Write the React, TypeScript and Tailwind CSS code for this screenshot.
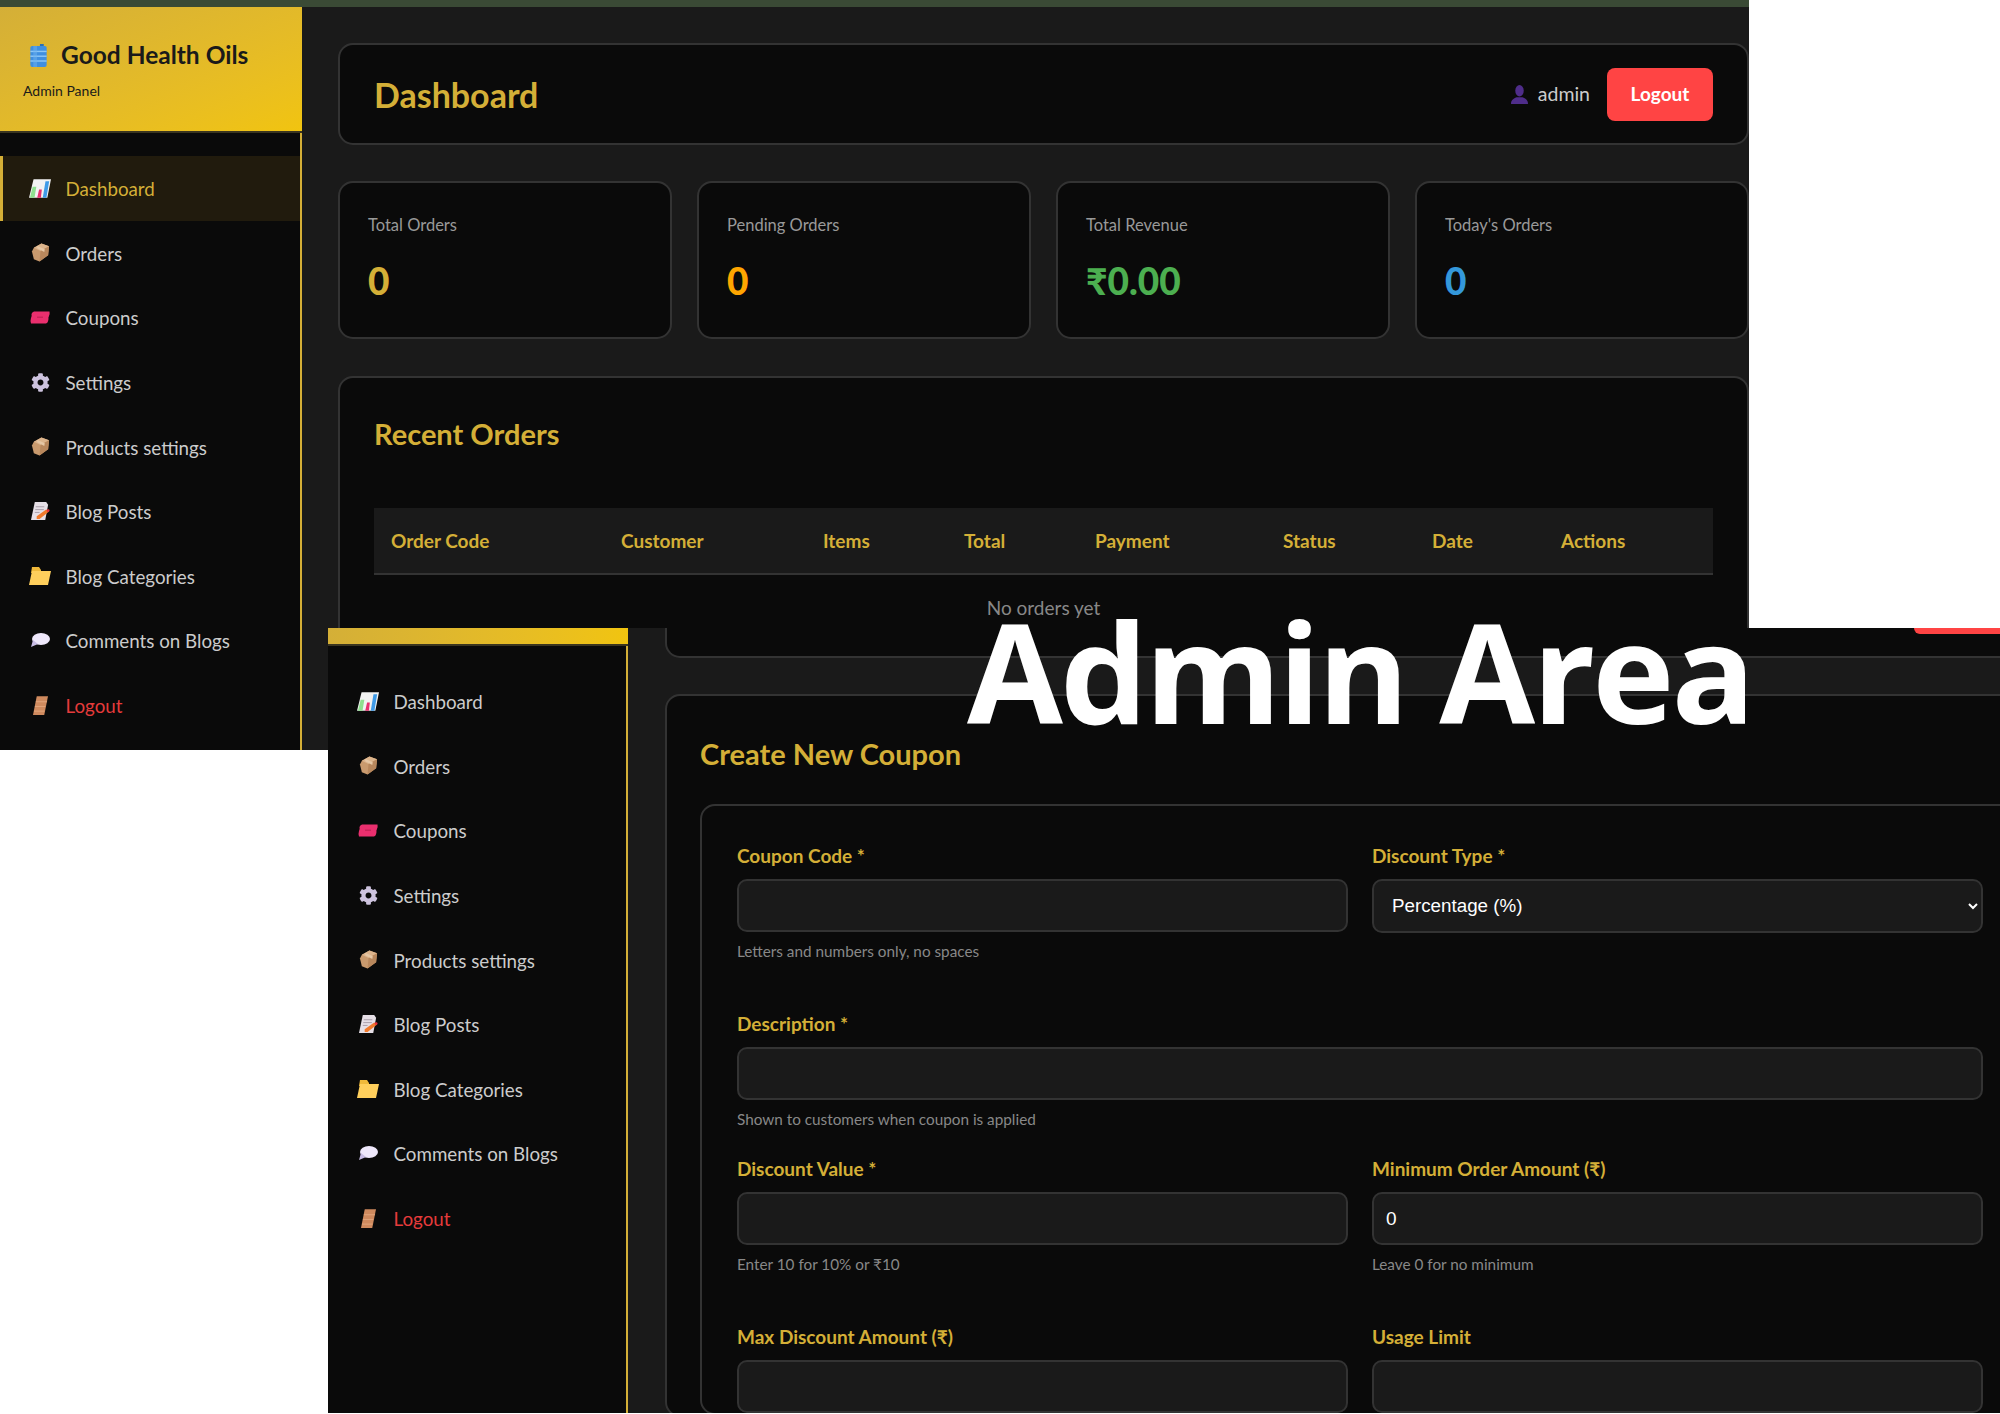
import { FaCog } from "react-icons/fa";

const GOLD = "text-[#d4af37]";

function ChartIcon() {
  return (
    <svg viewBox="0 0 24 20" className="h-[19px] w-[22px] shrink-0">
      <polygon points="5,0 24,0 20,20 0,20" fill="#f3f3f3" />
      <polygon points="4,8 8,8 6,20 1,20" fill="#8fe08f" />
      <polygon points="11,11 14,11 13,20 9,20" fill="#e8306f" />
      <polygon points="18,2 22,2 19,20 15,20" fill="#3f9be8" />
    </svg>
  );
}

function BoxIcon() {
  return (
    <svg viewBox="0 0 20 20" className="h-[19px] w-[19px] shrink-0">
      <path d="M11 0.5 19 3.5 18 13 9 19.5 3 17 1 9 3 5Z" fill="#c99a6e" />
      <path d="M3 5 11 0.5 19 3.5 10 8.5Z" fill="#dcb48c" />
      <path d="M10 8.5 19 3.5 18 13 9 19.5Z" fill="#b8875c" />
      <path d="M6.5 3 14.5 6.5 14 9.5 6.5 5.5Z" fill="#e6c7a5" />
    </svg>
  );
}

function TicketIcon() {
  return (
    <svg viewBox="0 0 20 13" className="h-[13px] w-[20px] shrink-0">
      <path d="M4 0.5H19.5Q20 3 19 5 18 7 18.5 8 18 12 16 12.5H1Q0 10 1 7 2 5 1.5 3 2 1 4 0.5Z" fill="#ea2f6e" />
      <rect x="7" y="5.5" width="6" height="1.5" fill="#c9245a" />
    </svg>
  );
}

function MemoIcon() {
  return (
    <svg viewBox="0 0 20 20" className="h-[19px] w-[19px] shrink-0">
      <polygon points="4,0 16,0 18,3 15,19 0,19" fill="#e6dfe6" />
      <path d="M5 5h9M4.5 8h9M4 11h5" stroke="#a89ca8" strokeWidth="1" />
      <polygon points="16,8 19,10 9,18 6,18 6,15" fill="#f27a2c" />
      <circle cx="18" cy="9" r="1.5" fill="#ea2f3a" />
    </svg>
  );
}

function FolderIcon() {
  return (
    <svg viewBox="0 0 22 18" className="h-[18px] w-[22px] shrink-0">
      <polygon points="3,0 10,0 12,3 12,6 2,6" fill="#f0b93a" />
      <polygon points="3,4 22,4 19,18 0,18" fill="#ffcf5c" />
    </svg>
  );
}

function BubbleIcon() {
  return (
    <svg viewBox="0 0 20 14" className="h-[14px] w-[20px] shrink-0">
      <ellipse cx="11" cy="6" rx="9" ry="6" fill="#efe8fb" />
      <polygon points="3,7 8,11 1,14" fill="#c9bde6" />
    </svg>
  );
}

function DoorIcon() {
  return (
    <svg viewBox="0 0 16 20" className="h-[19px] w-[15px] shrink-0">
      <polygon points="4,0 16,0 12,20 0,20" fill="#cf8a5e" />
      <path d="M3 6h12M2 11h11M1 16h11" stroke="#e3a67e" strokeWidth="1" />
    </svg>
  );
}

function DrumIcon() {
  return (
    <svg viewBox="0 0 17 24" className="h-[23px] w-[17px] shrink-0">
      <rect x="10" y="0" width="4" height="3" fill="#2a6fb8" />
      <rect x="0" y="2" width="17" height="22" rx="2" fill="#3f8fe0" />
      <rect x="0" y="7" width="17" height="1.5" fill="#8cc6f5" />
      <rect x="0" y="12" width="17" height="1.5" fill="#8cc6f5" />
      <rect x="0" y="17" width="17" height="1.5" fill="#8cc6f5" />
      <rect x="3" y="2" width="4" height="22" fill="#6db2ee" opacity="0.5" />
    </svg>
  );
}

function UserIcon() {
  return (
    <svg viewBox="0 0 18 20" className="h-[19px] w-[17px] shrink-0">
      <ellipse cx="9" cy="6" rx="4.5" ry="6" fill="#4f2d8a" />
      <path d="M0 20c0-5 4-6 6-7h6c2 1 6 2 6 7z" fill="#4f2d8a" />
    </svg>
  );
}

const navItems = [
  { label: "Dashboard", icon: <ChartIcon /> },
  { label: "Orders", icon: <BoxIcon /> },
  { label: "Coupons", icon: <TicketIcon /> },
  { label: "Settings", icon: <FaCog className="h-[19px] w-[19px] shrink-0 text-[#cdc3de]" /> },
  { label: "Products settings", icon: <BoxIcon /> },
  { label: "Blog Posts", icon: <MemoIcon /> },
  { label: "Blog Categories", icon: <FolderIcon /> },
  { label: "Comments on Blogs", icon: <BubbleIcon /> },
  { label: "Logout", icon: <DoorIcon /> },
];

function NavList({ active }: { active?: string }) {
  return (
    <nav className="flex flex-col">
      {navItems.map((item) => {
        const isActive = item.label === active;
        const color = isActive
          ? GOLD
          : item.label === "Logout"
            ? "text-[#e53b3b]"
            : "text-[#cccccc]";
        return (
          <div
            key={item.label}
            className={`flex h-[64.6px] items-center border-l-[3px] pl-[27px] ${
              isActive ? "border-[#d4af37] bg-[#211b0d]" : "border-transparent"
            }`}
          >
            <span className="flex w-[20px] shrink-0 items-center justify-center">
              {item.icon}
            </span>
            <span className={`ml-[15.5px] pt-[2px] text-[18.75px] ${color}`}>{item.label}</span>
          </div>
        );
      })}
    </nav>
  );
}

function StatCard({ label, value, color }: { label: string; value: string; color: string }) {
  return (
    <div className="h-[158px] rounded-[15px] border-2 border-[#333333] bg-[#0a0a0a] px-[28px] pt-[30px]">
      <div className="text-[16.5px] leading-[24px] text-[#999999]">{label}</div>
      <div className={`mt-[20px] text-[37px] font-black leading-[48px] ${color}`}>{value}</div>
    </div>
  );
}

function Field({
  label,
  hint,
  value,
}: {
  label: string;
  hint?: string;
  value?: string;
}) {
  return (
    <div>
      <label className={`mb-[10px] block text-[19px] font-bold leading-[27px] ${GOLD}`}>{label}</label>
      <input
        defaultValue={value}
        className="h-[53px] w-full rounded-[10px] border-2 border-[#333333] bg-[#1a1a1a] px-[12px] font-['Liberation_Sans',sans-serif] text-[19px] text-white outline-none"
      />
      {hint && <p className="mt-[9px] text-[15.3px] leading-[20px] text-[#888888]">{hint}</p>}
    </div>
  );
}

const columns = [
  { name: "Order Code", w: "w-[230px]" },
  { name: "Customer", w: "w-[202px]" },
  { name: "Items", w: "w-[141px]" },
  { name: "Total", w: "w-[131px]" },
  { name: "Payment", w: "w-[188px]" },
  { name: "Status", w: "w-[149px]" },
  { name: "Date", w: "w-[129px]" },
  { name: "Actions", w: "w-[169px]" },
];

// top-left capture of the admin dashboard
function DashboardShot() {
  return (
    <div className="absolute left-0 top-0 flex h-[750px] w-[1749px] flex-col overflow-hidden bg-[#1a1a1a]">
      <div className="h-[7px] shrink-0 bg-[#3a4a35]" />
      <div className="flex min-h-0 flex-1">
        <aside className="flex w-[302px] shrink-0 flex-col">
          <div className="h-[126px] shrink-0 border-b-[2px] border-[#3a3520] bg-gradient-to-br from-[#d4af37] to-[#f1c40f] pl-[23px] pt-[31px]">
            <div className="flex items-center pl-[7px]">
              <DrumIcon />
              <span className="ml-[14px] text-[24.5px] font-bold leading-[34px] text-[#1a1a1a]">Good Health Oils</span>
            </div>
            <div className="mt-[9px] text-[14px] leading-[20px] text-[#1a1a1a]">Admin Panel</div>
          </div>
          <div className="flex-1 border-r-2 border-[#d4af37] bg-[#0a0a0a] pt-[23px]">
            <NavList active="Dashboard" />
          </div>
        </aside>
        <main className="min-w-0 flex-1 pl-[36px] pt-[36px]">
          <header className="flex h-[102px] items-center justify-between rounded-[15px] border-2 border-[#333333] bg-[#0a0a0a] pl-[34px] pr-[34px]">
            <h1 className={`pt-[1px] text-[34px] font-bold ${GOLD}`}>Dashboard</h1>
            <div className="flex items-center">
              <UserIcon />
              <span className="ml-[10px] text-[19.5px] text-[#cccccc]">admin</span>
              <button className="ml-[17px] h-[53px] w-[106px] rounded-[8px] bg-[#ff4444] text-[19px] font-bold text-white">
                Logout
              </button>
            </div>
          </header>
          <div className="mt-[36px] grid grid-cols-4 gap-[25px]">
            <StatCard label="Total Orders" value="0" color="text-[#d4af37]" />
            <StatCard label="Pending Orders" value="0" color="text-[#ffa500]" />
            <StatCard label="Total Revenue" value="₹0.00" color="text-[#4caf50]" />
            <StatCard label="Today's Orders" value="0" color="text-[#3498db]" />
          </div>
          <section className="mt-[37px] rounded-[15px] border-2 border-[#333333] bg-[#0a0a0a] px-[34px] pb-[40px] pt-[38px]">
            <h2 className={`text-[29px] font-bold leading-[36px] ${GOLD}`}>Recent Orders</h2>
            <table className="mt-[56px] w-full table-fixed">
              <thead>
                <tr className="h-[66px] border-b-2 border-[#333333] bg-[#1a1a1a]">
                  {columns.map((c) => (
                    <th key={c.name} className={`${c.w} pl-[17px] pt-[2px] text-left text-[19px] font-bold ${GOLD}`}>
                      {c.name}
                    </th>
                  ))}
                </tr>
              </thead>
              <tbody>
                <tr>
                  <td colSpan={8} className="h-[68px] text-center text-[19px] text-[#888888]">
                    No orders yet
                  </td>
                </tr>
              </tbody>
            </table>
          </section>
        </main>
      </div>
    </div>
  );
}

// lower-right capture, the coupon form
function CouponShot() {
  return (
    <div className="absolute left-[328px] top-[628px] flex h-[785px] w-[1672px] overflow-hidden bg-[#1a1a1a]">
      <aside className="flex w-[300px] shrink-0 flex-col">
        <div className="h-[18px] shrink-0 border-b-[2px] border-[#3a3520] bg-gradient-to-r from-[#d4af37] to-[#f1c40f]" />
        <div className="flex-1 border-r-2 border-[#d4af37] bg-[#0a0a0a] pt-[23px]">
          <NavList />
        </div>
      </aside>
      <main className="min-w-0 flex-1 pl-[37px]">
        <div className="h-[30px] w-[1390px] rounded-b-[15px] border-x-2 border-b-2 border-[#333333] bg-[#0a0a0a]">
          <div className="ml-[1247px] h-[6px] w-[106px] rounded-b-[8px] bg-[#ff4444]" />
        </div>
        <section className="mt-[36px] w-[1390px] rounded-[15px] border-2 border-[#333333] bg-[#0a0a0a] px-[33px] pt-[40px]">
          <h2 className={`text-[29px] font-bold leading-[36px] ${GOLD}`}>Create New Coupon</h2>
          <div className="mt-[32px] rounded-[15px] border-2 border-[#333333] px-[35px] pt-[36px]">
            <div className="mb-[49px] grid grid-cols-2 gap-x-[24px]">
              <Field label="Coupon Code *" hint="Letters and numbers only, no spaces" />
              <div>
                <label className={`mb-[10px] block text-[19px] font-bold leading-[27px] ${GOLD}`}>Discount Type *</label>
                <select className="h-[54px] w-full rounded-[10px] border-2 border-[#333333] bg-[#1a1a1a] px-[14px] pb-[2px] font-['Liberation_Sans',sans-serif] text-[18.8px] text-white outline-none">
                  <option>Percentage (%)</option>
                </select>
              </div>
            </div>
            <div className="mb-[26px]">
              <Field label="Description *" hint="Shown to customers when coupon is applied" />
            </div>
            <div className="mb-[49px] grid grid-cols-2 gap-x-[24px]">
              <Field label="Discount Value *" hint="Enter 10 for 10% or ₹10" />
              <Field label="Minimum Order Amount (₹)" hint="Leave 0 for no minimum" value="0" />
            </div>
            <div className="grid grid-cols-2 gap-x-[24px]">
              <Field label="Max Discount Amount (₹)" />
              <Field label="Usage Limit" />
            </div>
          </div>
        </section>
      </main>
    </div>
  );
}

export default function App() {
  return (
    <div className="relative h-[1414px] w-[2000px] overflow-hidden bg-white font-['Lato',sans-serif]">
      <DashboardShot />
      <CouponShot />
      <div className="absolute left-[967px] top-[585px] whitespace-nowrap font-['Open_Sans',sans-serif] text-[139px] font-bold leading-[170px] tracking-[-3px] text-white">
        Admin Area
      </div>
    </div>
  );
}
